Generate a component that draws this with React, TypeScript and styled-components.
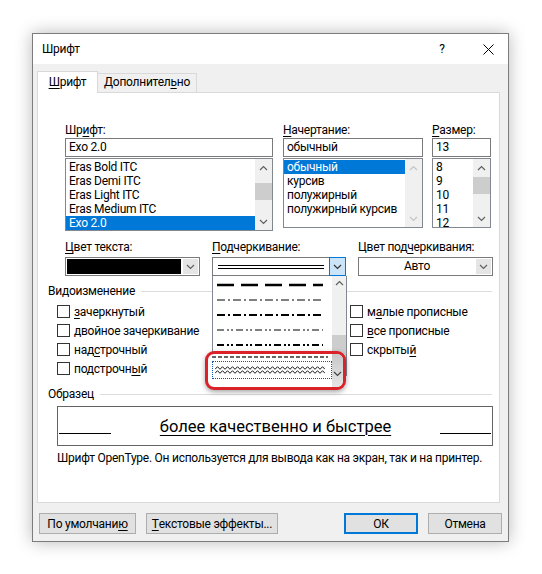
import React from 'react';
import styled, {createGlobalStyle} from 'styled-components';

const GlobalStyle = createGlobalStyle`
  body {
    margin: 0;
    background: #fff;
    font-family: Roboto, "Noto Sans", sans-serif;
    font-size: 12px;
    letter-spacing: -0.25px;
    color: #000;
  }
`;

const Page = styled.div`
  padding: 33px 0 0 32px;
  height: 574px;
  box-sizing: border-box;
`;

const Dialog = styled.div`
  width: 477px;
  height: 509px;
  box-sizing: border-box;
  border: 1px solid #7c7c7c;
  background: #f0f0f0;
  box-shadow: 0 0 16px rgba(0, 0, 0, 0.28);
  display: flex;
  flex-direction: column;
`;

const TitleBar = styled.div`
  height: 30px;
  background: #fff;
  display: flex;
  align-items: center;
  padding-left: 9px;
`;

const Title = styled.div`
  flex: 1;
`;

const Help = styled.div`
  width: 14px;
  text-align: center;
  margin-right: 34px;
`;

const Close = styled.div`
  width: 12px;
  margin-right: 13px;
  display: flex;
  align-items: center;
`;

const Body = styled.div`
  flex: 1;
  display: flex;
  flex-direction: column;
  padding: 7px 8px 0 4px;
`;

const Tabs = styled.div`
  height: 21px;
  display: flex;
  align-items: flex-end;
`;

const Tab = styled.div<{$active?: boolean; $w: number}>`
  position: relative;
  z-index: 1;
  width: ${p => p.$w}px;
  height: ${p => (p.$active ? 22 : 19)}px;
  box-sizing: border-box;
  border: 1px solid #d9d9d9;
  border-bottom: none;
  ${p => (p.$active ? '' : 'border-left: none;')}
  margin-bottom: ${p => (p.$active ? -1 : 0)}px;
  background: ${p => (p.$active ? '#fff' : '#f0f0f0')};
  text-align: center;
  line-height: ${p => (p.$active ? 20 : 17)}px;
`;

const Panel = styled.div`
  height: 411px;
  box-sizing: border-box;
  border: 1px solid #d9d9d9;
  background: #fff;
  padding-left: 10px;
`;

const U = styled.span`
  text-decoration: underline;
  text-underline-offset: 2px;
`;

const Row = styled.div<{$top: number; $left: number}>`
  display: flex;
  align-items: flex-start;
  margin-top: ${p => p.$top}px;
  margin-left: ${p => p.$left}px;
`;

const Field = styled.div<{$w: number; $gap?: number}>`
  width: ${p => p.$w}px;
  margin-right: ${p => p.$gap ?? 0}px;
  position: relative;
`;

const Label = styled.div`
  height: 15px;
  line-height: 15px;
  white-space: nowrap;
`;

const TextBox = styled.div`
  height: 19px;
  box-sizing: border-box;
  border: 1px solid #7a7a7a;
  padding: 0 3px;
  line-height: 17px;
`;

const ListBox = styled.div<{$h: number}>`
  margin-top: 1px;
  height: ${p => p.$h}px;
  box-sizing: border-box;
  border: 1px solid #828790;
  display: flex;
`;

const Items = styled.div`
  flex: 1;
  padding-top: 1px;
  overflow: hidden;
`;

const Item = styled.div<{$sel?: boolean}>`
  height: 14px;
  line-height: 14px;
  padding-left: 3px;
  white-space: nowrap;
  background: ${p => (p.$sel ? '#0078d7' : 'transparent')};
  color: ${p => (p.$sel ? '#fff' : '#000')};
`;

const ScrollBar = styled.div<{$w: number}>`
  width: ${p => p.$w}px;
  background: #f0f0f0;
  display: flex;
  flex-direction: column;
`;

const ScrollArrow = styled.div<{$h?: number}>`
  height: ${p => p.$h ?? 17}px;
  display: flex;
  align-items: center;
  justify-content: center;
`;

const Track = styled.div`
  flex: 1;
`;

const Thumb = styled.div<{$top: number; $h: number}>`
  margin-top: ${p => p.$top}px;
  height: ${p => p.$h}px;
  background: #cdcdcd;
`;

const Combo = styled.div`
  margin-top: 2px;
  height: 19px;
  box-sizing: border-box;
  border: 1px solid #7a7a7a;
  background: #fff;
  display: flex;
  padding: 1px;
`;

const ComboValue = styled.div<{$fill?: string}>`
  flex: 1;
  background: ${p => p.$fill ?? 'transparent'};
  display: flex;
  align-items: center;
  justify-content: center;
  line-height: 15px;
  margin-right: 2px;
`;

const ComboArrow = styled.div<{$active?: boolean}>`
  width: 15px;
  display: flex;
  align-items: center;
  justify-content: center;
  background: ${p => (p.$active ? '#cce4f7' : '#e5e5e5')};
  ${p => (p.$active ? 'border: 1px solid #0078d7; margin: -2px -2px -2px 0;' : '')}
`;

const Popup = styled.div`
  position: absolute;
  top: 100%;
  left: 0;
  z-index: 2;
  width: 135px;
  height: 100px;
  box-sizing: border-box;
  border: 1px solid #828790;
  border-top: none;
  background: #fff;
  display: flex;
`;

const PopupItems = styled.div`
  flex: 1;
  padding: 1px 0 0 4px;
`;

const PopupItem = styled.div`
  height: 15px;
  display: flex;
  align-items: center;
`;

const Callout = styled.div`
  position: absolute;
  left: -7px;
  top: 111px;
  z-index: 3;
  width: 141px;
  height: 39px;
  box-sizing: border-box;
  border: 3px solid #dc2229;
  border-radius: 9px;
  background: #fff;
  box-shadow: 0 2px 5px rgba(0, 0, 0, 0.35);
  display: flex;
  overflow: hidden;
`;

const CalloutItems = styled.div`
  flex: 1;
  padding-left: 4px;
`;

const CutLine = styled.div`
  height: 6px;
  display: flex;
  align-items: center;
  opacity: 0.6;
`;

const Focused = styled.div`
  margin-top: 1px;
  height: 18px;
  box-sizing: border-box;
  border: 1px dotted #1457a8;
  display: flex;
  align-items: center;
  padding-left: 2px;
`;

const CalloutStrip = styled.div`
  width: 11px;
  background: linear-gradient(#c8c8c8, #e6e6e6);
  display: flex;
  align-items: center;
  justify-content: center;
  padding-top: 6px;
`;

const GroupHead = styled.div<{$top: number}>`
  margin-top: ${p => p.$top}px;
  height: 15px;
  line-height: 15px;
  display: flex;
  align-items: center;
  margin-right: 7px;
`;

const GroupLine = styled.div`
  flex: 1;
  height: 1px;
  background: #dcdcdc;
  margin-left: 6px;
`;

const Checks = styled.div`
  margin: 3px 0 0 9px;
  display: grid;
  grid-template-columns: 293px 1fr;
  grid-auto-flow: column;
  grid-template-rows: repeat(4, 19px);
`;

const Check = styled.div`
  display: flex;
  align-items: center;
  white-space: nowrap;
`;

const Box = styled.div`
  width: 13px;
  height: 13px;
  box-sizing: border-box;
  border: 1px solid #333;
  background: #fff;
  margin-right: 4px;
`;

const Sample = styled.div`
  margin: 4px 0 0 9px;
  width: 436px;
  height: 40px;
  box-sizing: border-box;
  border: 1px solid #646464;
  display: grid;
  grid-template-columns: 52px 1fr 51px;
  align-items: center;
  padding: 0 1px;
`;

const BaseRule = styled.div`
  height: 1px;
  background: #000;
  margin-top: 14px;
`;

const SampleText = styled.div`
  text-align: center;
  font-size: 16.5px;
  letter-spacing: 0;
  text-decoration: underline;
  text-underline-offset: 3px;
  text-decoration-thickness: 1px;
  white-space: nowrap;
`;

const Note = styled.div`
  margin: 5px 0 0 9px;
  line-height: 15px;
  white-space: nowrap;
`;

const Buttons = styled.div`
  display: flex;
  padding: 10px 0 0 2px;
  margin-right: -2px;
`;

const Button = styled.div<{$w: number; $gap?: number; $default?: boolean}>`
  width: ${p => p.$w}px;
  height: 21px;
  box-sizing: border-box;
  margin-right: ${p => p.$gap ?? 0}px;
  background: #e1e1e1;
  border: ${p => (p.$default ? '2px solid #0078d7' : '1px solid #adadad')};
  display: flex;
  align-items: center;
  justify-content: center;
  white-space: nowrap;
`;

const Spacer = styled.div`
  flex: 1;
`;

function Chevron({up, color = '#606060'}: {up?: boolean; color?: string}) {
    return (
        <svg width="9" height="6" viewBox="0 0 9 6">
            <polyline
                points={up ? '1,5 4.5,1.5 8,5' : '1,1 4.5,4.5 8,1'}
                fill="none"
                stroke={color}
                strokeWidth="1.2"
            />
        </svg>
    );
}

function Stroke({dash, w = 1, width = 106}: {dash?: string; w?: number; width?: number}) {
    return (
        <svg width={width} height="6" viewBox={`0 0 ${width} 6`}>
            <line x1="0" y1="3" x2={width} y2="3" stroke="#000" strokeWidth={w} strokeDasharray={dash}/>
        </svg>
    );
}

function Wave({y = 3, width = 112, color = '#333'}: {y?: number; width?: number; color?: string}) {
    let pts = '';
    for (let x = 0, i = 0; x <= width; x += 2.5, i++) {
        pts += `${x},${i % 2 ? y - 1.3 : y + 1.3} `;
    }
    return <polyline points={pts} fill="none" stroke={color} strokeWidth="1"/>;
}

function Waves({double, width = 106}: {double?: boolean; width?: number}) {
    return (
        <svg width={width} height="10" viewBox={`0 0 ${width} 10`}>
            {double ? (
                <>
                    <Wave y={3} width={width} color="#1a1a1a"/>
                    <Wave y={7} width={width} color="#1a1a1a"/>
                </>
            ) : (
                <Wave y={5} width={width}/>
            )}
        </svg>
    );
}

export default function App() {
    return (
        <Page>
            <GlobalStyle/>
            <Dialog>
                <TitleBar>
                    <Title>Шрифт</Title>
                    <Help>?</Help>
                    <Close>
                        <svg width="11" height="11" viewBox="0 0 11 11">
                            <path d="M0.5 0.5 L10.5 10.5 M10.5 0.5 L0.5 10.5" stroke="#000" strokeWidth="1"/>
                        </svg>
                    </Close>
                </TitleBar>
                <Body>
                    <Tabs>
                        <Tab $active $w={61}><U>Ш</U>рифт</Tab>
                        <Tab $w={99}>Дополнител<U>ь</U>но</Tab>
                    </Tabs>
                    <Panel>
                        <Row $top={30} $left={17}>
                            <Field $w={208} $gap={10}>
                                <Label>Шр<U>и</U>фт:</Label>
                                <TextBox>Exo 2.0</TextBox>
                                <ListBox $h={73}>
                                    <Items>
                                        <Item>Eras Bold ITC</Item>
                                        <Item>Eras Demi ITC</Item>
                                        <Item>Eras Light ITC</Item>
                                        <Item>Eras Medium ITC</Item>
                                        <Item $sel>Exo 2.0</Item>
                                    </Items>
                                    <ScrollBar $w={17}>
                                        <ScrollArrow><Chevron up/></ScrollArrow>
                                        <Track><Thumb $top={7} $h={17}/></Track>
                                        <ScrollArrow><Chevron/></ScrollArrow>
                                    </ScrollBar>
                                </ListBox>
                            </Field>
                            <Field $w={140} $gap={9}>
                                <Label><U>Н</U>ачертание:</Label>
                                <TextBox>обычный</TextBox>
                                <ListBox $h={70}>
                                    <Items>
                                        <Item $sel>обычный</Item>
                                        <Item>курсив</Item>
                                        <Item>полужирный</Item>
                                        <Item>полужирный курсив</Item>
                                    </Items>
                                    <ScrollBar $w={17}>
                                        <ScrollArrow><Chevron up color="#c4c4c4"/></ScrollArrow>
                                        <Track/>
                                        <ScrollArrow><Chevron color="#c4c4c4"/></ScrollArrow>
                                    </ScrollBar>
                                </ListBox>
                            </Field>
                            <Field $w={59}>
                                <Label><U>Р</U>азмер:</Label>
                                <TextBox>13</TextBox>
                                <ListBox $h={70}>
                                    <Items>
                                        <Item>8</Item>
                                        <Item>9</Item>
                                        <Item>10</Item>
                                        <Item>11</Item>
                                        <Item>12</Item>
                                    </Items>
                                    <ScrollBar $w={17}>
                                        <ScrollArrow><Chevron up/></ScrollArrow>
                                        <Track><Thumb $top={1} $h={17}/></Track>
                                        <ScrollArrow><Chevron/></ScrollArrow>
                                    </ScrollBar>
                                </ListBox>
                            </Field>
                        </Row>

                        <Row $top={9} $left={17}>
                            <Field $w={135} $gap={12}>
                                <Label><U>Ц</U>вет текста:</Label>
                                <Combo>
                                    <ComboValue $fill="#000"/>
                                    <ComboArrow><Chevron/></ComboArrow>
                                </Combo>
                            </Field>
                            <Field $w={134} $gap={12}>
                                <Label><U>П</U>одчеркивание:</Label>
                                <Combo>
                                    <ComboValue>
                                        <svg width="106" height="6" viewBox="0 0 106 6">
                                            <line x1="0" y1="1.5" x2="106" y2="1.5" stroke="#000" strokeWidth="1"/>
                                            <line x1="0" y1="4.5" x2="106" y2="4.5" stroke="#000" strokeWidth="1"/>
                                        </svg>
                                    </ComboValue>
                                    <ComboArrow $active><Chevron color="#333"/></ComboArrow>
                                </Combo>
                                <Popup>
                                    <PopupItems>
                                        <PopupItem><Stroke dash="17 7" w={2.5}/></PopupItem>
                                        <PopupItem><Stroke dash="8 3 2 3"/></PopupItem>
                                        <PopupItem><Stroke dash="8 3 2 3" w={2.2}/></PopupItem>
                                        <PopupItem><Stroke dash="7 3 2 2 2 3"/></PopupItem>
                                        <PopupItem><Stroke dash="7 3 2 2 2 3" w={2.2}/></PopupItem>
                                        <PopupItem><Waves/></PopupItem>
                                        <PopupItem><Stroke dash="4 2" w={2}/></PopupItem>
                                    </PopupItems>
                                    <ScrollBar $w={14}>
                                        <ScrollArrow $h={15}><Chevron up/></ScrollArrow>
                                        <Track><Thumb $top={46} $h={40}/></Track>
                                    </ScrollBar>
                                </Popup>
                                <Callout>
                                    <CalloutItems>
                                        <CutLine><Stroke dash="4 2" w={2} width={116}/></CutLine>
                                        <Focused><Waves double width={110}/></Focused>
                                    </CalloutItems>
                                    <CalloutStrip><Chevron color="#444"/></CalloutStrip>
                                </Callout>
                            </Field>
                            <Field $w={135}>
                                <Label>Цвет под<U>ч</U>еркивания:</Label>
                                <Combo>
                                    <ComboValue>Авто</ComboValue>
                                    <ComboArrow><Chevron/></ComboArrow>
                                </Combo>
                            </Field>
                        </Row>

                        <GroupHead $top={8}>
                            Видоизменение
                            <GroupLine/>
                        </GroupHead>
                        <Checks>
                            <Check><Box/><U>з</U>ачеркнутый</Check>
                            <Check><Box/>двойное зачеркивание</Check>
                            <Check><Box/>над<U>с</U>трочный</Check>
                            <Check><Box/>подстрочн<U>ы</U>й</Check>
                            <Check><Box/>м<U>а</U>лые прописные</Check>
                            <Check><Box/><U>в</U>се прописные</Check>
                            <Check><Box/>скрыты<U>й</U></Check>
                        </Checks>

                        <GroupHead $top={9}>
                            Образец
                            <GroupLine/>
                        </GroupHead>
                        <Sample>
                            <BaseRule/>
                            <SampleText>более качественно и быстрее</SampleText>
                            <BaseRule/>
                        </Sample>
                        <Note>Шрифт OpenType. Он используется для вывода как на экран, так и на принтер.</Note>
                    </Panel>
                    <Buttons>
                        <Button $w={97} $gap={10}>По умолчани<U>ю</U></Button>
                        <Button $w={132}><U>Т</U>екстовые эффекты...</Button>
                        <Spacer/>
                        <Button $w={74} $gap={10} $default>ОК</Button>
                        <Button $w={74}>Отмена</Button>
                    </Buttons>
                </Body>
            </Dialog>
        </Page>
    );
}
